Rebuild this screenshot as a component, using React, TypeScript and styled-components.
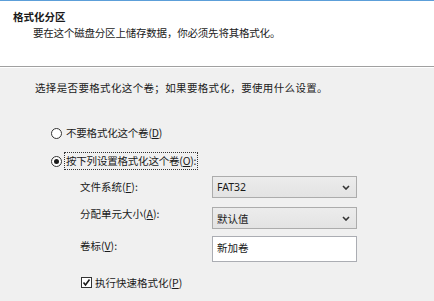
import * as React from "react"
import styled, { createGlobalStyle } from "styled-components"

const GlobalStyle = createGlobalStyle`
    html, body {
        margin: 0;
        padding: 0;
        background: #f0f0f0;
    }
    body {
        font-family: "Noto Sans CJK SC", "Noto Sans", sans-serif;
        font-size: 10.5px;
        color: #1a1a1a;
        width: 434px;
        height: 301px;
        overflow: hidden;
    }
`

const Page = styled.div`
    display: flex;
    flex-direction: column;
    width: 434px;
    height: 301px;
`

const Header = styled.div`
    box-sizing: border-box;
    height: 67px;
    background: #ffffff;
    border-top: 1px solid #5c9fd9;
    border-bottom: 1px solid #a0a0a0;
    padding: 9px 0 0 13px;
    display: flex;
    flex-direction: column;
    gap: 2px;
`

const Title = styled.div`
    font-weight: bold;
    line-height: 14px;
`

const Subtitle = styled.div`
    line-height: 14px;
    padding-left: 20px;
    letter-spacing: -0.2px;
`

const Body = styled.div`
    flex: 1;
    border-top: 1px solid #ffffff;
    padding: 13px 0 0 35px;
    display: flex;
    flex-direction: column;
`

const Intro = styled.div`
    line-height: 14px;
    margin-bottom: 30px;
    letter-spacing: 0.35px;
`

const RadioRow = styled.label<{ $gap?: number }>`
    display: flex;
    align-items: center;
    height: 16px;
    padding-left: 16px;
    margin-bottom: ${p => p.$gap ?? 0}px;
`

const RadioDot = styled.span<{ $checked?: boolean }>`
    box-sizing: border-box;
    width: 11px;
    height: 11px;
    border-radius: 50%;
    border: 1px solid #333333;
    background: #ffffff;
    margin-right: 3px;
    display: flex;
    align-items: center;
    justify-content: center;

    &::after {
        content: "";
        display: ${p => (p.$checked ? "block" : "none")};
        width: 5px;
        height: 5px;
        border-radius: 50%;
        background: #1a1a1a;
    }
`

const RadioText = styled.span<{ $focused?: boolean }>`
    line-height: 14px;
    padding: 1px 1px;
    letter-spacing: -0.2px;
    outline: ${p => (p.$focused ? "1px dotted #333" : "none")};
`

const Key = styled.span`
    text-decoration: underline;
`

const FieldGrid = styled.div`
    display: grid;
    grid-template-columns: 132px 145px;
    margin: 7px 0 0 45px;
    align-items: center;
`

const FieldLabel = styled.div`
    line-height: 14px;
`

const Select = styled.div<{ $mt?: number }>`
    box-sizing: border-box;
    height: 22px;
    margin-top: ${p => p.$mt ?? 0}px;
    border: 1px solid #acacac;
    background: linear-gradient(#ececec, #e3e3e3);
    display: flex;
    align-items: center;
    justify-content: space-between;
    padding: 0 6px 0 4px;
    font-family: "Noto Sans", "Noto Sans CJK SC", sans-serif;
`

const TextBox = styled.div<{ $mt?: number }>`
    box-sizing: border-box;
    height: 26px;
    margin-top: ${p => p.$mt ?? 0}px;
    border: 1px solid #abadb3;
    background: #ffffff;
    padding: 4px 0 0 4px;
    line-height: 14px;
`

const CheckRow = styled.label`
    display: flex;
    align-items: center;
    height: 16px;
    margin: 12px 0 0 46px;
`

const CheckBox = styled.span`
    box-sizing: border-box;
    width: 11px;
    height: 11px;
    border: 1px solid #333333;
    background: #ffffff;
    margin-right: 3px;
    display: flex;
    align-items: center;
    justify-content: center;
`

const Chevron = () => (
    <svg width="8" height="5" viewBox="0 0 8 5">
        <path d="M1 1 L4 4 L7 1" fill="none" stroke="#333" strokeWidth="1.6" />
    </svg>
)

export default function App() {
    return (
        <Page>
            <GlobalStyle />
            <Header>
                <Title>格式化分区</Title>
                <Subtitle>要在这个磁盘分区上储存数据，你必须先将其格式化。</Subtitle>
            </Header>
            <Body>
                <Intro>选择是否要格式化这个卷；如果要格式化，要使用什么设置。</Intro>
                <RadioRow $gap={12}>
                    <RadioDot />
                    <RadioText>不要格式化这个卷(<Key>D</Key>)</RadioText>
                </RadioRow>
                <RadioRow>
                    <RadioDot $checked />
                    <RadioText $focused>按下列设置格式化这个卷(<Key>O</Key>):</RadioText>
                </RadioRow>
                <FieldGrid>
                    <FieldLabel>文件系统(<Key>F</Key>):</FieldLabel>
                    <Select>FAT32<Chevron /></Select>
                    <FieldLabel>分配单元大小(<Key>A</Key>):</FieldLabel>
                    <Select $mt={9}>默认值<Chevron /></Select>
                    <FieldLabel>卷标(<Key>V</Key>):</FieldLabel>
                    <TextBox $mt={7}>新加卷</TextBox>
                </FieldGrid>
                <CheckRow>
                    <CheckBox>
                        <svg width="9" height="9" viewBox="0 0 9 9">
                            <path d="M1.5 4.5 L3.5 7 L7.5 1.5" fill="none" stroke="#1a1a1a" strokeWidth="1.6" />
                        </svg>
                    </CheckBox>
                    <span>执行快速格式化(<Key>P</Key>)</span>
                </CheckRow>
            </Body>
        </Page>
    )
}
